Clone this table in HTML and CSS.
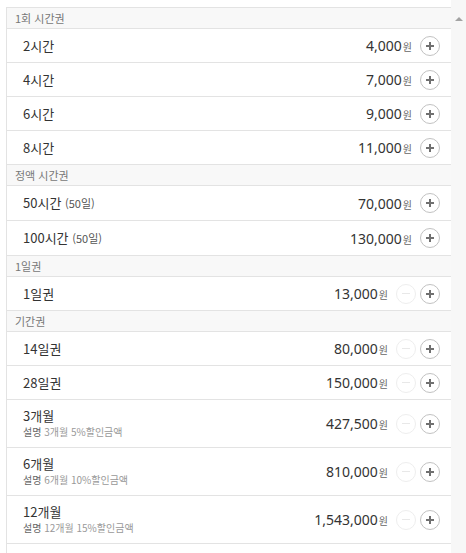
FILE: index.html
```html
<!DOCTYPE html>
<html lang="ko">
<head>
<meta charset="utf-8">
<link rel="stylesheet" href="styles.css">
</head>
<body>
<div class="page">
  <div class="list">
    <div class="group">1회 시간권</div>
    <div class="row"><div class="name">2시간</div><div class="right"><span class="price">4,000<small>원</small></span><span class="btn plus"></span></div></div>
    <div class="row"><div class="name">4시간</div><div class="right"><span class="price">7,000<small>원</small></span><span class="btn plus"></span></div></div>
    <div class="row"><div class="name">6시간</div><div class="right"><span class="price">9,000<small>원</small></span><span class="btn plus"></span></div></div>
    <div class="row"><div class="name">8시간</div><div class="right"><span class="price">11,000<small>원</small></span><span class="btn plus"></span></div></div>

    <div class="group">정액 시간권</div>
    <div class="row tall"><div class="name">50시간 <span class="sub">(50일)</span></div><div class="right"><span class="price">70,000<small>원</small></span><span class="btn plus"></span></div></div>
    <div class="row tall"><div class="name">100시간 <span class="sub">(50일)</span></div><div class="right"><span class="price">130,000<small>원</small></span><span class="btn plus"></span></div></div>

    <div class="group">1일권</div>
    <div class="row"><div class="name">1일권</div><div class="right"><span class="price">13,000<small>원</small></span><span class="btn minus"></span><span class="btn plus"></span></div></div>

    <div class="group">기간권</div>
    <div class="row"><div class="name">14일권</div><div class="right"><span class="price">80,000<small>원</small></span><span class="btn minus"></span><span class="btn plus"></span></div></div>
    <div class="row"><div class="name">28일권</div><div class="right"><span class="price">150,000<small>원</small></span><span class="btn minus"></span><span class="btn plus"></span></div></div>
    <div class="row desc"><div class="name"><div class="title">3개월</div><div class="note"><b>설명</b> 3개월 5%할인금액</div></div><div class="right"><span class="price">427,500<small>원</small></span><span class="btn minus"></span><span class="btn plus"></span></div></div>
    <div class="row desc"><div class="name"><div class="title">6개월</div><div class="note"><b>설명</b> 6개월 10%할인금액</div></div><div class="right"><span class="price">810,000<small>원</small></span><span class="btn minus"></span><span class="btn plus"></span></div></div>
    <div class="row desc"><div class="name"><div class="title">12개월</div><div class="note"><b>설명</b> 12개월 15%할인금액</div></div><div class="right"><span class="price">1,543,000<small>원</small></span><span class="btn minus"></span><span class="btn plus"></span></div></div>
    <div class="row"></div>
  </div>
  <div class="scrollbar"><span class="arrow"></span></div>
</div>
</body>
</html>
```

FILE: styles.css
```css
html, body {
  margin: 0;
  padding: 0;
  background: #fff;
  height: 100%;
  overflow: hidden;
}
body {
  font-family: "Noto Sans CJK KR", "Noto Sans", sans-serif;
  color: #333;
}
.page {
  display: flex;
  height: 553px;
}
.list {
  flex: 1;
  margin: 7px 0 0 6px;
  border-top: 1px solid #e3e3e3;
  border-left: 1px solid #e3e3e3;
  overflow: hidden;
}
.group {
  height: 20px;
  line-height: 20px;
  padding-left: 8px;
  font-size: 11px;
  color: #777;
  background: #f8f8f8;
  border-bottom: 1px solid #e3e3e3;
}
.row {
  display: flex;
  align-items: center;
  justify-content: space-between;
  height: 33px;
  padding: 0 11px 0 16px;
  border-bottom: 1px solid #e3e3e3;
  background: #fff;
}
.row.tall {
  height: 34px;
}
.row.desc {
  height: 47px;
}
.name {
  font-size: 13px;
  line-height: 16px;
  color: #333;
}
.title {
  line-height: 18px;
  margin-top: -2px;
}
.sub {
  font-size: 11px;
  color: #555;
}
.note {
  font-size: 10px;
  line-height: 14px;
  color: #999;
}
.note b {
  font-weight: normal;
  color: #666;
}
.right {
  display: flex;
  align-items: center;
}
.price {
  font-size: 14px;
  color: #333;
  margin-right: 8px;
  font-family: "Noto Sans", "Noto Sans CJK KR", sans-serif;
}
.price small {
  font-family: "Noto Sans CJK KR", sans-serif;
  font-size: 10px;
  color: #666;
  margin-left: 1px;
}
.btn {
  position: relative;
  width: 20px;
  height: 20px;
  border-radius: 50%;
  box-sizing: border-box;
}
.btn.plus {
  border: 1px solid #c2c2c2;
}
.btn.minus {
  border: 1px solid #eeeeee;
  margin-right: 4px;
}
.btn::before,
.btn::after {
  content: "";
  position: absolute;
  left: 50%;
  top: 50%;
  background: #707070;
}
.btn::before {
  width: 8px;
  height: 2px;
  margin: -1px 0 0 -4px;
}
.btn.plus::after {
  width: 2px;
  height: 8px;
  margin: -4px 0 0 -1px;
}
.btn.minus::before {
  background: #e8e8e8;
  height: 1px;
}
.btn.minus::after {
  display: none;
}
.scrollbar {
  width: 15px;
  flex: none;
  background: #f7f7f7;
  display: flex;
  justify-content: center;
  padding-top: 17px;
  box-sizing: border-box;
}
.arrow {
  width: 0;
  height: 0;
  border-left: 4px solid transparent;
  border-right: 4px solid transparent;
  border-bottom: 4px solid #a3a3a3;
}
```
